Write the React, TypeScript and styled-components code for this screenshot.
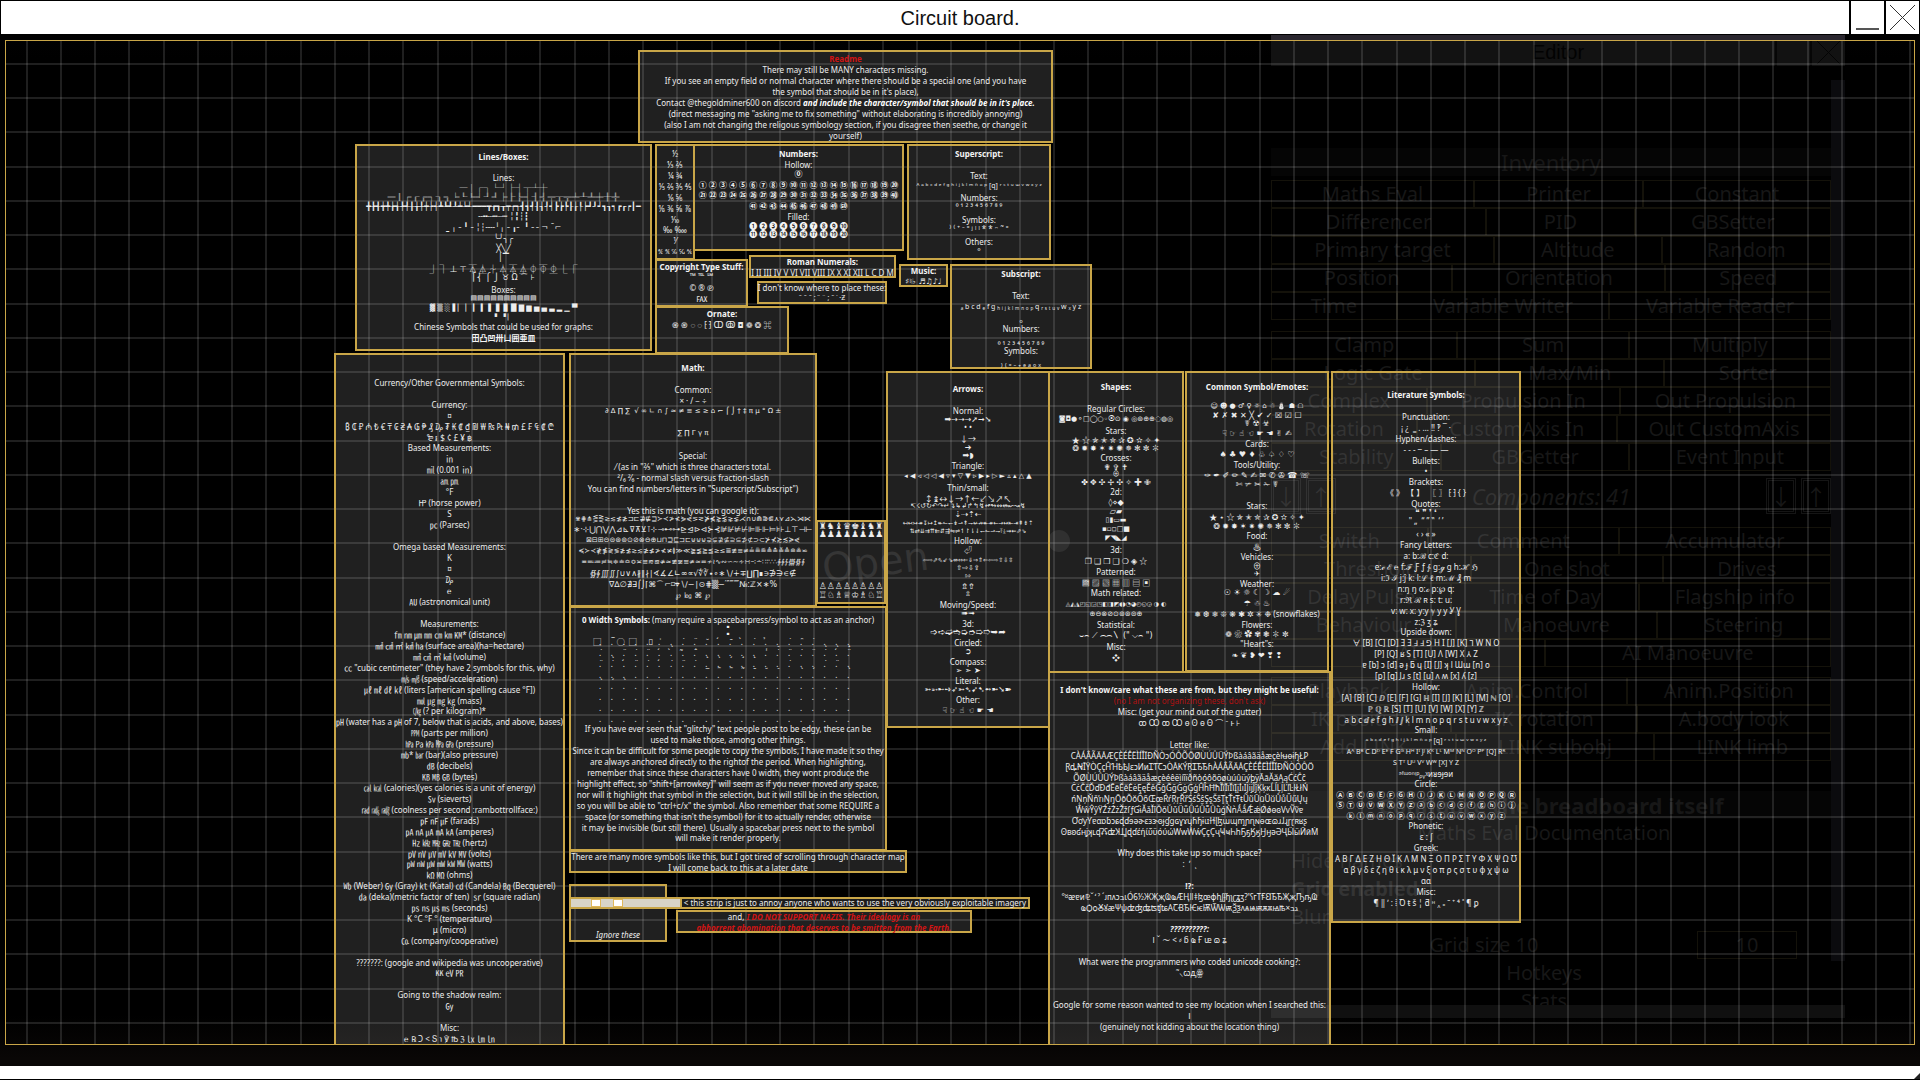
import React from "react";
import styled, { createGlobalStyle, css } from "styled-components";

const GOLD = "#c9a648";
const TEXT = "#ededed";
const SYMBOL_FONTS = '"Noto Sans", "Noto Sans CJK JP", "DejaVu Sans", sans-serif';

const Global = createGlobalStyle`
  * { box-sizing: border-box; }
  body { margin: 0; background: #000; overflow: hidden; }
  button, input { font: inherit; color: inherit; }
  h1, h2, p { margin: 0; font-weight: inherit; }
`;

/* ---------- window frame ---------- */

const Screen = styled.main`
  position: relative;
  display: flex;
  flex-direction: column;
  height: 100vh;
  background: linear-gradient(#030203, #000 60px, #000 94%, #090706 98%);
  font-family: ${SYMBOL_FONTS};
`;

const TitleBar = styled.header`
  display: flex;
  align-items: stretch;
  flex: none;
  height: 35px;
  border: 1px solid #000;
  background: #fff;
  color: #111;
  font-family: "Liberation Sans", Arial, sans-serif;
  z-index: 1;
`;

const Title = styled.h1`
  flex: 1;
  padding-left: 70px;
  font-size: 20px;
  line-height: 34px;
  text-align: center;
`;

const WindowButton = styled.button`
  width: 35px;
  padding: 0;
  border: 0;
  border-left: 2px solid #000;
  background: none;
  svg { display: block; width: 33px; height: 33px; }
`;

const BottomBar = styled.footer`
  flex: none;
  display: flex;
  justify-content: flex-end;
  height: 14px;
  border-bottom: 1px solid #000;
  background: #fff;
  z-index: 1;
`;

/* ---------- board ---------- */

const Board = styled.section`
  position: relative;
  flex: 1;
  margin: 5px 5px 21px;
  border: 1px solid ${GOLD};
  overflow: hidden;
`;

const line = "rgba(255, 255, 255, 0.12)";
const Grid = styled.div`
  position: absolute;
  inset: 0;
  background-image:
    linear-gradient(90deg, ${line} 2px, transparent 2px 34px, ${line} 34px 36px, transparent 36px 68px, ${line} 68px 70px, transparent 70px 103px, ${line} 103px 105px, transparent 105px),
    linear-gradient(${line} 2px, transparent 2px 34px, ${line} 34px 36px, transparent 36px 68px, ${line} 68px 70px, transparent 70px 103px, ${line} 103px 105px, transparent 105px);
  background-size: 137px 100%, 100% 137px;
  background-position: 54px 0, 0 22px;
`;

const Card = styled.article<{ $x: number; $y: number; $w: number; $h: number }>`
  position: absolute;
  left: ${(p) => p.$x - 6}px;
  top: ${(p) => p.$y - 41}px;
  width: ${(p) => p.$w}px;
  height: ${(p) => p.$h}px;
  border: 2px solid ${GOLD};
  background: rgba(255, 255, 255, 0.125);
  color: ${TEXT};
  font-size: 8px;
  text-align: center;
`;

const Line = styled.p<{ $step: number; $flags: string }>`
  display: flex;
  justify-content: center;
  height: 11px;
  margin-top: ${(p) => p.$step - 11}px;
  line-height: 11px;
  white-space: pre;
  ${(p) => p.$flags.includes("b") && css`font-weight: 700; color: #f4f4f4;`}
  ${(p) => p.$flags.includes("r") && css`color: #b01010;`}
  ${(p) => p.$flags.includes("i") && css`font-style: italic;`}
  ${(p) => p.$flags.includes("s") && css`font-size: 6px;`}
  ${(p) => p.$flags.includes("m") && css`font-size: 7px;`}
  ${(p) => p.$flags.includes("l") && css`font-size: 9px;`}
  ${(p) => p.$flags.includes("d") && css`font-family: "DejaVu Sans", sans-serif;`}
`;

const Strong = styled.strong`
  font-style: italic;
  color: #fff;
`;
const Soft = styled.span`
  font-weight: 400;
  color: ${TEXT};
`;
const Red = styled.em`
  color: #d01414;
  font-weight: 700;
`;

const Marks = styled.div`
  display: grid;
  grid-template-columns: repeat(22, 1fr);
  grid-auto-rows: 11px;
  margin: -3px 26px 0 28px;
  line-height: 11px;
  text-align: left;
`;

const Strip = styled.div`
  position: absolute;
  left: 563px;
  top: 856px;
  display: flex;
  width: 461px;
  height: 12px;
  border: 2px solid ${GOLD};
  background: #1c1c1c;
  color: ${TEXT};
  font-size: 8px;
`;
const PaleBlock = styled.div`
  display: flex;
  gap: 12px;
  width: 111px;
  padding-left: 20px;
  border-right: 2px solid ${GOLD};
  background: #d8d4c8;
`;
const Tile = styled.i`
  width: 10px;
  border: 1px solid #e0b85a;
  background: #fff;
`;
const StripText = styled.p`
  flex: 1;
  line-height: 8px;
  text-align: center;
  white-space: nowrap;
`;

/* Each row reads "step flags|text": step is the distance from the row above. */
function Rows({ src }: { src: string }) {
  return (
    <>
      {src
        .trim()
        .split("\n")
        .map((row, i) => {
          const bar = row.indexOf("|");
          const head = row.slice(0, bar);
          return (
            <Line key={i} $step={parseInt(head, 10) || 11} $flags={head}>
              {row.slice(bar + 1)}
            </Line>
          );
        })}
    </>
  );
}

const range = (from: number, to: number, sep = " ") =>
  Array.from({ length: to - from + 1 }, (_, i) => String.fromCodePoint(from + i)).join(sep);

type CardData = { x: number; y: number; w: number; h: number; rows: string };

const cards: CardData[] = [
  {
    x: 355, y: 144, w: 297, h: 207,
    rows: `
16b|Lines/Boxes:
21|Lines:
10b|─│┌┐└┘├┤┬┴┼
9b|═║╒╓╔╕╖╗╘╙╚╛╜╝╞╟╠╡╢╣╤╥╦╧╨╩╪╫╬
10d|╋╊╉╈╇╆╅╄╃╂╁╀┿┾┽┻┺┹┸┷┶┵━━━┳┲┱┰┯┮┭┫┪┩┨┧┦┥┣┢┡┠┟┞┝┛┚┙┓┒┑┏┎┍┃━
10d|╌╍┄┅┈┉ ╎╏┆┇
11d|⎵ ╷ ╴╹╶ ╎┆╌╌╵╷╶ ╻╴ ╹╶ ╴¬ ¯⌐
11d|╰╯╮╭
10d|╳╲╱
9d|│▔
11|⏌ ⏋ ⊥ ⊤ ⏄ ⏅ ⏆ ⏃ ⏄ ⏅ ⏀ ⏁ ⏂ ⎿ ⎾
9d|⎡⎨ ⎧ ⎭ ♉ Ω ⌒ ⊦
12|Boxes:
9md|▤▤▤▤▤▤▤▤▤▤
10md|▓ ▒ ░ ▌▏ ▏ ▎ ▍ ▌ ▋ ▊ █ ▇ ▆ ▅ ▄ ▃ ▂ ▁ ▀
8sd|▘ ▝ ▏
10|Chinese Symbols that could be used for graphs:
11b|田凸凹卅凵囲亜皿
`,
  },
  {
    x: 655, y: 144, w: 40, h: 116,
    rows: `
13|½
|⅓ ⅔
|¼ ¾
|⅕ ⅖ ⅗ ⅘
|⅙ ⅚
|⅛ ⅜ ⅝ ⅞
|⅒
10|‰ ‱
|⅟
m|℀ ℁ ℅ ℆ ⅍
`,
  },
  {
    x: 693, y: 144, w: 211, h: 107,
    rows: `
13b|Numbers:
|Hollow:
9b|⓪
b|${range(0x2460, 0x2473)}
10b|${range(0x3251, 0x325f)} ${range(0x32b1, 0x32b5)}
b|${range(0x32b6, 0x32bf)}
|Filled:
9b|${range(0x2776, 0x277f)}
8b|${range(0x24eb, 0x24f4)}
`,
  },
  {
    x: 907, y: 144, w: 144, h: 116,
    rows: `
13b|Superscript:
22|Text:
10m|ᴬ ᵃ ᵇ ᶜ ᵈ ᵉ ᶠ ᵍ ʰ ⁱ ʲ ᵏ ˡ ᵐ ⁿ ᵒ ᵖ [q] ʳ ˢ ᵗ ᵘ ᵚ ᵛ ʷ ˣ ʸ ᶻ
12|Numbers:
9|⁰ ¹ ² ³ ⁴ ⁵ ⁶ ⁷ ⁸ ⁹
13|Symbols:
9|⁾ ⁽ ⁺ ⁻ ⁼ ʲ ˡ ˡ * * ᵔ ˜ ⁼
13|Others:
10|°
`,
  },
  {
    x: 655, y: 259, w: 93, h: 48,
    rows: `
11b|Copyright Type Stuff:
9|™ ℡ ℠
12|© ® ℗
|℻
`,
  },
  { x: 749, y: 255, w: 147, h: 23, rows: `
10b|Roman Numerals:
11|I II III IV V VI VII VIII IX X XI XII L C D M` },
  { x: 757, y: 281, w: 130, h: 23, rows: `
10|I don't know where to place these:
10m|˜ ˜ ˜ ; ˙˙ ¨ ; ˜ ˙ ·Ƶ` },
  { x: 899, y: 264, w: 49, h: 23, rows: `
10b|Music:
11d|♯♮♭ ♬♫♪♩` },
  {
    x: 950, y: 264, w: 142, h: 105,
    rows: `
13b|Subscript:
22|Text:
m|ₐ b c d ₑ f g ₕ ᵢ ⱼ ₖ ₗ ₘ ₙ ₒ ₚ q ᵣ ₛ ₜ ᵤ ᵥ w ₓ y z
12|ₒ
10|Numbers:
12|₀ ₁ ₂ ₃ ₄ ₅ ₆ ₇ ₈ ₉
10|Symbols:
12|₎ ₍ ₌ ₋ ₊ ₔ ₐ ₒ ₓ
`,
  },
  { x: 655, y: 306, w: 134, h: 48, rows: `
11b|Ornate:
11|֍ ֎ ◌ ◌ ⁅ ⁆ ↀ ↂ ◘ ❁ ❂ ⌘` },
  {
    x: 334, y: 353, w: 231, h: 760,
    rows: `
33|Currency/Other Governmental Symbols:
22|Currency:
|¤
|₿ ₵ ₽ ₼ ₺ € ₸ ₢ ₴ ₳ ₲ ₱ ₰ ₯ ₮ ₭ ₡ ₫ ₪ ₩ ₨ ₧ ₦ ₥ £ ₣ ₠ ₡ ₾
|₻ ៛ $ ¢ £ ¥ ฿
10|Based Measurements:
|㏌
|㏕ (0.001 ㏌)
|㏂ ㏘
|°F
|㏋ (horse power)
|S
|㍶ (Parsec)
22|Omega based Measurements:
|K
|¤
|₯
|℮
|㍳ (astronomical unit)
22|Measurements:
|㎙ ㎚ ㎛ ㎜ ㎝ ㎞ ㏎* (distance)
|㎟ ㎠ ㎡ ㎢ ㏊ (surface area)(ha=hectare)
|㎣ ㎤ ㎥ ㎦ (volume)
|㏄ "cubic centimeter" (they have 2 symbols for this, why)
|㎧ ㎨ (speed/acceleration)
|㎕ ㎖ ㎗ ㎘ (liters [american spelling cause °F])
|㏖ ㎍ ㎎ ㎏ (mass)
10|㏆ (? per kilogram)*
|㏗ (water has a ㏗ of 7, below that is acids, and above, bases)
|㏙ (parts per million)
|㍱ ㎩ ㎪ ㎫ ㎬ (pressure)
|㏔* ㍴ (bar)(also pressure)
|㏈ (decibels)
|㎅ ㎆ ㎇ (bytes)
|㎈ ㎉ (calories)(yes calories is a unit of energy)
|㏜ (sieverts)
|㎭ ㎮ ㎯ (coolness per second :rambottrollface:)
|㎊ ㎋ ㎌ (farads)
|㎀ ㎁ ㎂ ㎃ ㎄ (amperes)
|㎐ ㎑ ㎒ ㎓ ㎔ (hertz)
|㎴ ㎵ ㎶ ㎷ ㎸ ㎹ (volts)
10|㎺ ㎻ ㎼ ㎽ ㎾ ㎿ (watts)
|㏀ ㏁ (ohms)
|㏝ (Weber) ㏉ (Gray) ㏏ (Katal) ㏅ (Candela) ㏃ (Becquerel)
|㍲ (deka)(metric factor of ten)  ㏛ (square radian)
|㎰ ㎱ ㎲ ㎳ (seconds)
|K °C °F ° (temperature)
|μ (micro)
|㏇ (company/cooperative)
22|???????: (google and wikipedia was uncooperative)
10|㏍ ㋎ ㏚
22|Going to the shadow realm:
|㏉
22|Misc:
|℮ ℞ Ɔ < Տ ℩ ℣ ℔ ℨ ㏓ ㏐ ㏑
`,
  },
  {
    x: 569, y: 353, w: 248, h: 254,
    rows: `
18b|Math:
22|Common:
|× · / − ÷
md|∂ ∆ ∏ ∑  √ ∞ ∟ ∩ ∫ ≈ ≠ ≡ ≤ ≥ ⌂ ⌐ ⌠ ⌡ † ‡ π μ ° Ω ±
22md|∑ ∏ Γ γ π
22|Special:
|⁄ (as in "⅔" which is three characters total.
|²/₆ ²⁄₆ - normal slash versus fraction-slash
|You can find numbers/letters in "Superscript/Subscript")
22|Yes this is math (you can google it):
9md|⋇⋕⋔⋚⋛≳≲≴≵⊐⊏⋣⋢⊒≻≺≯≮⋟⋞⋝⋜⋡⋠⋩⋨⋧⋦⋌∩∪⋒⋑⋐⋏⋎⊿⋋⋊⋉
10d|∗·⊹⋃⋂⋁⋀⊿⊾⊽⊼⊻⊺⊹⊸⊷⊶⊵⊴⊳⊲⊱⊰⊯⊮⊭⊬⊫⊪⊩⊨⊧⊦⊥⊤⊣⊢
11md|⊠⊟⊞⊝⊜⊛⊚⊙⊘⊗⊖⊕⊔⊓⊒⊑⊐⊏⊎⊍⊌⊋⊊⊉⊈⊇⊆⊅⊄⊃⊂⊁⊀≿≾≽⋞
11md|≼≻≺≹≸≷≶≵≴≳≲≱≰≯≮≭≬≫≪≩≨≧≦≥≤≣≢≡≠≟≞≝≜≛≚≙≘≗⋍
11md|≖≕≔≓≒≑≐≏≎≍≌≋≊≉≈≇≆≅≄≃≂≁≀∿∾∽∼∻∺∹∸∷∶∵∴∳∲∱∰∯∮
11d|∯∮∭∬∫∪∨∧∦∥∤∣∢∡∠∟∞∝√∜∛∙∘∗∖∕∔∓∐∏∎∍∌∋∊∉
11d|∇∆∅∄∃⌠⌡⌈⌘⌒⌐⌑⌖∖∕−∣⊙⋕▒−′″‴⁗№:ℤ×∗%
11d|℘ ㏒ ⌘ ℘
`,
  },
  {
    x: 816, y: 520, w: 70, h: 84,
    rows: `
10ld|♜♞♝♛♚♝♞♜
8ld|♟♟♟♟♟♟♟♟
52ld|♙♙♙♙♙♙♙♙
9ld|♖♘♗♕♔♗♘♖
`,
  },
  {
    x: 886, y: 371, w: 164, h: 357,
    rows: `
21b|Arrows:
22|Normal:
9d|➡→➝→➚➞➘
7|• •
12|↓→
9d|➔
8d|➡◗
10|Triangle:
11md|◂ ◀ ◃ ◁ ◁ ◀ ▿ ▾ ▽ ▼ ▹ ▶ ▸ ▷ ► ▵ ▴ △ ▲
11|Thin/small:
11|↕↨↔↓→↑←↙↘↗↖
8md|↸☇↺↻↶↷↵↴↳↲↱↰↯↫↬↭↮↜↝↯
8d|⇣⇢⇡⇠
8sd|↤↢↣↠↧↦↥↞↼↽↡⇀↟⇁↚↛↞↠←→↔⇤⇥⇞⇟⇡
8sd|⇅⇄⇊⇉⇈⇇⇵⇶⇋⇌↿↾⇂⇃↽↼⇀⇁⤒⤓⇝⇜⇗⇘
10|Hollow:
9|⏎
10sd|⇦⇨⇗⇖⇙⇘⇎⇔⇐⇓⇒⇑⇐⇦⇨⇧⇩⇳
9md|⇧⇨⇩⇪
8md|⇰
10d|⇯⇮
8md|⇫
10|Moving/Speed:
9d|➠➟
10|3d:
9ld|➩➪➫➬➭➮➯➱➥➦
10|Circled:
9d|➲
10|Compass:
9d|➢ ➣ ➤
10|Literal:
9d|➳➵➸➺➶➳➴➹➷➻➼➘➽
10|Other:
11d|☟ ☞ ☝ ☜ ☛ ☚
`,
  },
  {
    x: 1048, y: 371, w: 136, h: 302,
    rows: `
19b|Shapes:
22|Regular Circles:
11md|◙◘●⚬□◯○◦⦿⊙ ◉ ◎⊚⊕⊕◌◍◎
11|Stars:
9|★ ☆ ✯ ✭ ✮ ✰ ✪ ✫ ✧ ✦
8|❂ ✹ ✸ ✶ ✷ ✺ ✵ ✻ ✼ ✽
10|Crosses:
9|✟ ✞ ✝
7m|⊕
8|✤ ✥ ✣ ✢ ✣ ✧ ✚ ✙
10|2d:
11d|◊⋄◆
9d|▱▰
9md|▯▮▭▬
9md|▪▫◽□■
9md|◤◥◣◢
11|3d:
11|❐ ❏ ❒ ❑ ❍ ◈ ☆
11|Patterned:
11|▩ ▨ ▧ ▦ ▥ ▤ ▣
10|Math related:
11sd|◬◭◮◰◱◲◳◧◨◩◖◗◔◕◴◵◶ ◑ ◐
11md|⊕⊖⊗⊘⊙⊚⊛⊜⊕
10|Statistical:
11d|⌣⌢ ⟋ ⌒⌒〵 (" ⌵⌢ ")
11|Misc:
11|❖
`,
  },
  {
    x: 1185, y: 371, w: 144, h: 301,
    rows: `
19b|Common Symbol/Emotes:
20md|☺ ☻ ● ♂ ♀ ☼ ⌂ ☃ ⛄ ☗ ☖
9d|✘ ✗ ✖ ✕ ╳ ✔ ✓ ☒ ☑ ☐
8d|☤ ☢ ☣
10d|☟ ☞ ☝ ☜ ☛ ☚ ✌ ✍
10|Cards:
11d|♠ ♣ ♥ ♦ ♧ ♤ ♢ ♡
10|Tools/Utility:
11d|✑ ✒ ✐ ✏ ✎ ✍ ✉ ✆ ✇ ☎ ☏
9d|✄ ✃ ✂ ✁ ☤
21|Stars:
11|★ ⋆ ☆ ✯ ✭ ✮ ✰ ✪ ✫ ✧ ✦
9|❂ ✹ ✸ ✶ ✷ ✺ ✵ ✻ ✼ ✽
10|Food:
11|♨
10|Vehicles:
9|⊕
8m|✈
10|Weather:
9d|☉ ☀ ☼ ☾ ☽ ☁ ☄
11d|☂ ☃ ♨
10|❅ ❆ ❄ ❊ ❋ ✱ ✲ ✳ ❉ (snowflakes)
11|Flowers:
9|❁ ❀ ✿ ✾ ❃ ✽ ✼
10|"Heart"s:
11|❧ ❦ ❥ ❤ ❣ ❢
`,
  },
  {
    x: 1331, y: 371, w: 190, h: 552,
    rows: `
27b|Literature Symbols:
22|Punctuation:
|¡ ¿  ‗ . … ‼ ‽ ‾ ·
|Hyphen/dashes:
|‐ ‑ ⁃ ‒ – — ―
|Bullets:
10|•
|Brackets:
|《 》 【 】  〖 〗 ⁅ ⁆ { }
|Quotes:
9d|❝ ❞ ❜ ❛
8|" „  “ ” ‟  ‘ ’
13|‹ › « »
|Fancy Letters:
|a: b:ℬ c:ℭ d:
|e:ℯ ℰ ℮ f:ℱ Ƒ ƒ ∱ g:ℊ g h:ℋ ℌ
|i:ℑ ℐ j:ĵ k: l:ℒ ℓ m:ℳ ₰ m
|n:ŋ ŋ o:ℴ p:℘ q:
|r:ℜ ℛ ʀ s: t: u:
|v: w: x: y:y ℽ y y Ỿ Ɣ
|z:ℨ ʒ ʑ
10|Upside down:
|∀ [B] [C] [D] Ǝ Ǝ Ⅎ Ⅎ ⅁ H I [J] [K] ⅂ W N O
|[P] [Q] ʁ S [T] [U] Λ [W] X ⅄ Z
|ɐ [b] ɔ [d] ǝ ɟ ƃ ɥ [I] [J] ʞ l Ɯɯ [n] o
|[p] [q] Jɹ s [t] [u] ʌ ʍ [x] ʎ [z]
|Hollow:
|[A] [B] [C] ⅅ [E] [F] [G] ℍ [I] [J] [K] [L] [M] ℕ [O]
|ℙ ℚ ℝ [S] [T] [U] [V] [W] [X] [Y] ℤ
|a b c ⅆ ⅇ f g h ⅈ ⅉ k l m n o p q r s t u v w x y z
10|Small:
11m|ᵃ ᵇ ᶜ ᵈ ᵉ ᶠ ᵍ ʰ ⁱ ʲ ᵏ ˡ ᵐ ⁿ ᵒ ᵖ [q] ʳ ˢ ᵗ ᵘ ᵚ ᵛ ʷ ˣ ʸ ᶻ
m|Aᴬ Bᴮ C Dᴰ Eᴱ F Gᴳ Hᴴ Iᴵ Jᴶ Kᴷ Lᴸ Mᴹ Nᴺ Oᴼ Pᴾ [Q] Rᴿ
m|S Tᵀ Uᵁ Vⱽ Wᵂ [X] Y Z
|ᵊᶠᵚᵒⁿᵎᵖᵨᵧᵡᴎᴚɘɟɘᴎ
10|Circle:
b|${range(0x24b6, 0x24c7)}
10b|${range(0x24c8, 0x24d9)}
b|${range(0x24da, 0x24e9)}
10|Phonetic:
|ɛ ː ʃ
|Greek:
|Α Β Γ Δ Ε Ζ Η Θ Ϊ Κ Λ Μ Ν Ξ Ο Π Ρ Σ Τ Υ Φ Χ Ψ Ω Ʊ
|α β γ δ ε ζ η θ ι κ λ μ ν ξ ο π ρ ς σ τ υ φ χ ψ ω
|ɑɑ
|Misc:
|¶̃ ‖ ʼ : ⁞ Ꝺ ŧ š ¦ ƌ ᵸ ‸ ₌ ˉ ⁺ ⁴ ˟ ¶ ꝑ
`,
  },
  {
    x: 1048, y: 671, w: 283, h: 400,
    rows: `
22b|I don't know/care what these are from, but they might be useful:
r|(no I am not organizing these, don't ask)
|Misc: (get your mind out of the gutter)
|ꝏ Ꝏ ꚙ Ꚙ ɵ Ꙩ ө Ꙫ ⌒ ᐨ ⱶ ⊦
22|Letter like:
|CÀÁÂÃÄÅÆÇÈÉÊËÌÍÎÏÐÑÒɔÓÔÕÖØÙÚÛÜÝÞßàáâãäåæçèŀʉɵɨɧŁꝐ
|ⱤȡꞤĪŸÒÇçĤꞪҌҌJɛɔИиꞮƬꞆɔÒÅKÝŖꞮЂЂɦÀÁÂÃÄÅÇÈÉÊËÌÍÎÏÐÑÒÓÔÖ
|ÕØÙÚÛÜÝÞßàáâãäåæçèéêëìíîïðñòóôõöøùúûüýþÿĀāĂăĄąĆćĈĉ
10|ĊċČčĎďĐđĒēĔĕĖėĘęĚěĜĝĞğĠġĢģĤĥĦħĨĩĪīĬĭĮįİıĲĳĴĵĶķĸĹĺĻļĽľĿŀŁłŃ
|ńŅņŇňŉŊŋŌōŎŏŐőŒœŔŕŖŗŘřŚśŜŝŞşŠšŢţŤťŦŧŨũŪūŬŭŮůŰűŲų
|ŴŵŶŷŸŹźŻżŽžſƒƓɨǍǎǏǐǑǒǓǔǕǖǗǘǙǚǛǜǵǸǹǺǻǼǽǾǿɵɞVvṼṽɐ
|ƠơƴƳɐɑɒɓɔɕɖɗɘəɚɛɜɝɞɟɠɡɢɣɤɥɦɧɨɩɪɫɬɭɮɯɰɱɲɳɴɵɶɷɹɺɻɼɽʀʁʂ
|ʘʙʚʛʜʝʞʟʠʡʢʣꞰꞱꞲɖɗέήίΰϋόύώWwẀẃÇçÇҷҸҹҺһҔҕӃӄӇӈәӘҶӸӹӢӣṀ
21|Why does this take up so much space?
|:  ʹ  ͺ
22b|⁉:
|°ᴽᴂɐᴎ⅊ˇ ̒ ˀ ´ᴊᴨᴧɔבɩÓ6½ЖҖҗҨҩÆҢǁǂɮœфꞕʃʄɧʅʗʓʒ?ꞌʕᴦTꞘꞚЂЂҖҗҦҧҨ
|ҩѺѻꙊꙋæΨψʣʤʥʦʧʨAꞆꞖЂѤѥѬѾѠѭѮѯʌѧѩѭѫꙛꙝꙓ×גב
21bi|??????????:
|ا ˇ ⁓ < ⸗ ᵷ ҩ Ғ ᵫ ɷ ʑ
22|What were the programmers who coded unicode cooking?:
|˜⸜ꙍꚉꙮ
32|Google for some reason wanted to see my location when I searched this:
|ⵏ
|(genuinely not kidding about the location thing)
`,
  },
];

const combining = [
  "\u20de\u0305\u20dd\u20de\u20df\u0351\u0316\u0307\u0308\u0306\u0301\u0304\u0300\u0307\u0309\u0320\u0307\u0311\u0307\u0316\u0316\u031f",
  "\u0307\u0316\u0308\u0307\u0308\u0301\u0300\u0303\u0302\u0319\u0316\u0317\u0318\u0319\u033e\u0307\u0308\u0307\u0308\u0307\u0301\u0308",
  "\u0308\u0307\u0301\u0308\u0307\u0301\u0307\u0308\u0307\u0332\u033c\u033c\u0330\u0331\u032e\u0320\u0307\u0316\u0317\u0307\u0308\u0316",
  "\u0316\u0317\u0316",
  "",
  "",
  "",
  "",
];

const paragraph = `
10|If you have ever seen that "glitchy" text people post to be edgy, these can be
|used to make those, among other things.
|Since it can be difficult for some people to copy the symbols, I have made it so they
|are always anchored directly to the rightof the period. When highlighting,
|remember that since these characters have 0 width, they wont produce the
|highlight effect, so "shift+[arrowkey]" will seem as if you never moved any space,
|nor will it highlight that symbol in the selection, but it will still be in the selection,
|so you will be able to "ctrl+c/x" the symbol. Also remember that some REQUIRE a
|space (or something that isn't the symbol) for it to actually render, otherwise
|it may be invisible (but still there). Usually a spacebar press next to the symbol
10|will make it render properly.
`;

/* ---------- dimmed editor window behind the board ---------- */

const Editor = styled.aside`
  position: absolute;
  left: 1271px;
  right: 75px;
  top: 35px;
  bottom: 62px;
  display: flex;
  flex-direction: column;
  overflow: hidden;
  padding-right: 14px;
  border-bottom: 13px solid #101010;
  color: #171717;
  font-size: 20px;

  &::after {
    content: "";
    position: absolute;
    top: 45px;
    right: 0;
    bottom: 44px;
    width: 14px;
    background: #0b0b0e;
  }
`;
const EditorTitle = styled.div`
  display: flex;
  flex: none;
  height: 31px;
  margin-right: -14px;
  border-top: 5px solid #2a272f;
  background: #121212;
  color: #020202;
  font-family: "Liberation Sans", Arial, sans-serif;
  line-height: 24px;
`;
const EditorName = styled.span`
  flex: 1;
  padding-left: 70px;
  text-align: center;
`;
const GhostBox = styled.button`
  width: 35px;
  padding: 0;
  border: 0;
  border-left: 2px solid #060606;
  background: none;
  svg { display: block; }
`;
const Heading = styled.h2<{ $top: number; $bold?: boolean }>`
  flex: none;
  margin-top: ${(p) => p.$top}px;
  background: #050505;
  line-height: 28px;
  font-size: 22px;
  font-weight: ${(p) => (p.$bold ? 700 : 400)};
  text-align: center;
`;
const Group = styled.div<{ $top: number }>`
  flex: none;
  margin-top: ${(p) => p.$top}px;
`;
const GroupRow = styled.div`
  display: flex;
  height: 28px;
`;
const Cell = styled.button<{ $grow: number }>`
  flex: ${(p) => p.$grow} 1 0;
  min-width: 0;
  padding: 0;
  border: 1px solid #14120a;
  background: none;
  line-height: 26px;
  white-space: nowrap;
`;
const Components = styled.div`
  display: flex;
  flex: none;
  justify-content: space-between;
  align-items: center;
  height: 56px;
  padding-bottom: 6px;
  font-size: 22px;
  font-style: italic;
`;
const Pair = styled.div`
  display: flex;
  gap: 5px;
`;
const MoveButton = styled.button`
  width: 30px;
  height: 36px;
  padding: 0;
  border: 3px double #151515;
  background: none;
  font-style: normal;
  line-height: 28px;
`;
const Option = styled.label<{ $bold?: boolean; $center?: boolean }>`
  display: block;
  flex: none;
  height: 28px;
  padding: 0 34px 0 20px;
  line-height: 28px;
  font-weight: ${(p) => (p.$bold ? 700 : 400)};
  text-align: ${(p) => (p.$center ? "center" : "left")};
`;
const SizeRow = styled.div`
  display: flex;
  flex: none;
  height: 28px;
  padding-right: 34px;
  line-height: 28px;
  label { flex: 1; text-align: center; }
  input { width: 100px; padding: 0; border: 1px solid #14120a; background: none; text-align: center; }
`;

type Cells = [string, number][];
const groups: { top: number; rows: Cells[] }[] = [
  {
    top: 4,
    rows: [
      [["Maths Eval", 202], ["Printer", 168], ["Constant", 187]],
      [["Differencer", 215], ["PID", 148], ["GBSetter", 196]],
      [["Primary target", 223], ["Altitude", 167], ["Random", 169]],
      [["Position", 181], ["Orientation", 213], ["Speed", 165]],
      [["Time", 125], ["Variable Writer", 213], ["Variable Reader", 222]],
    ],
  },
  {
    top: 11,
    rows: [
      [["Clamp", 186], ["Sum", 171], ["Multiply", 202]],
      [["Logic Gate", 204], ["Max/Min", 189], ["Sorter", 166]],
      [["Complex", 155], ["Propulsion In", 193], ["Out Propulsion", 211]],
      [["Rotation", 145], ["CustomAxis In", 200], ["Out CustomAxis", 214]],
      [["Stability", 170], ["GBGetter", 187], ["Event Input", 202]],
    ],
  },
];
const lateGroups: { top: number; rows: Cells[] }[] = [
  {
    top: 0,
    rows: [
      [["Switch", 156], ["Comment", 191], ["Accumulator", 212]],
      [["Threshold", 200], ["One shot", 191], ["Drives", 168]],
      [["Delay Pulse", 180], ["Time of Day", 187], ["Flagship info", 192]],
      [["Behaviour", 185], ["Manoeuvre", 200], ["Steering", 174]],
      [["AI", 273], ["AI Manoeuvre", 286]],
    ],
  },
  {
    top: 10,
    rows: [
      [["Playback", 155], ["Anim.Control", 200], ["Anim.Position", 204]],
      [["IK position", 180], ["IK rotation", 185], ["A.body look", 194]],
      [["Add LINK", 185], ["LINK subobj", 197], ["LINK limb", 177]],
    ],
  },
];

const Wordmark = styled.div`
  position: absolute;
  left: 822px;
  top: 532px;
  color: #181818;
  font-family: "DejaVu Sans", sans-serif;
  font-size: 40px;
  line-height: 60px;
  transform: rotate(-7deg);
`;
const Blob = styled.i`
  position: absolute;
  left: 1048px;
  top: 530px;
  width: 22px;
  height: 22px;
  border-radius: 50%;
  background: #131313;
`;

function GroupList({ items }: { items: { top: number; rows: Cells[] }[] }) {
  return (
    <>
      {items.map((g, i) => (
        <Group key={i} $top={g.top}>
          {g.rows.map((r, j) => (
            <GroupRow key={j}>
              {r.map(([label, grow]) => (
                <Cell key={label} $grow={grow}>{label}</Cell>
              ))}
            </GroupRow>
          ))}
        </Group>
      ))}
    </>
  );
}

export default function App() {
  return (
    <Screen>
      <Global />
      <Wordmark>Open</Wordmark>
      <Blob />
      <Editor>
        <EditorTitle>
          <EditorName>Editor</EditorName>
          <GhostBox aria-label="Minimise editor" />
          <GhostBox aria-label="Close editor">
            <svg width="33" height="26" viewBox="0 0 33 26"><path d="M5 1 28 24M28 1 5 24" stroke="#040404" /></svg>
          </GhostBox>
        </EditorTitle>
        <Heading $top={82}>Inventory</Heading>
        <GroupList items={groups} />
        <Components>
          <Pair>
            <MoveButton>↓</MoveButton>
            <MoveButton>↑</MoveButton>
          </Pair>
          <span>Components: 41</span>
          <Pair>
            <MoveButton>↓</MoveButton>
            <MoveButton>↑</MoveButton>
          </Pair>
        </Components>
        <GroupList items={lateGroups} />
        <Heading $top={30} $bold>Configure the breadboard itself</Heading>
        <Option $center>Maths Eval Documentation</Option>
        <Option>Hide names</Option>
        <Option $bold>Grid enabled</Option>
        <Option>Blur</Option>
        <SizeRow>
          <label htmlFor="grid-size">Grid size 10</label>
          <input id="grid-size" defaultValue="10" />
        </SizeRow>
        <Option $center>Hotkeys</Option>
        <Option $center>Stats</Option>
      </Editor>

      <TitleBar>
        <Title>Circuit board.</Title>
        <WindowButton aria-label="Minimise">
          <svg viewBox="0 0 33 33"><path d="M5 28H28" stroke="#555" strokeWidth="2" /></svg>
        </WindowButton>
        <WindowButton aria-label="Close">
          <svg viewBox="0 0 33 33"><path d="M4 4 29 29M29 4 4 29" stroke="#333" strokeWidth="1" /></svg>
        </WindowButton>
      </TitleBar>

      <Board>
        <Grid />
        <Card $x={638} $y={50} $w={415} $h={93}>
          <Line $step={12} $flags="br"><Red as="span">Readme</Red></Line>
          <Rows src={`
|There may still be MANY characters missing.
|If you see an empty field or normal character where there should be a special one (and you have
|the symbol that should be in it's place),`} />
          <Line $step={11} $flags="">Contact @thegoldminer600 on discord <Strong>and include the character/symbol that should be in it's place.</Strong></Line>
          <Rows src={`
|(direct messaging me "asking me to fix something" without elaborating is incredibly annoying)
|(also I am not changing the religous symbology section, if you disagree then seethe, or change it
|yourself)`} />
        </Card>

        {cards.map((c, i) => (
          <Card key={i} $x={c.x} $y={c.y} $w={c.w} $h={c.h}>
            <Rows src={c.rows} />
          </Card>
        ))}

        <Card $x={569} $y={606} $w={318} $h={245}>
          <Line $step={17} $flags="b">0 Width Symbols: <Soft>(many require a spacebarpress/symbol to act as an anchor)</Soft></Line>
          <Rows src={"7b|▪\n7b|▪"} />
          <Marks>
            {combining.flatMap((row, r) =>
              Array.from({ length: 22 }, (_, c) => <span key={`${r}-${c}`}>{"." + (row[c] ?? "")}</span>)
            )}
          </Marks>
          <Rows src={paragraph} />
        </Card>
        <Card $x={569} $y={850} $w={338} $h={23}>
          <Rows src={"10|There are many more symbols like this, but I got tired of scrolling through character map\n|I will come back to this at a later date"} />
        </Card>
        <Card $x={569} $y={884} $w={98} $h={58}>
          <Rows src={"54i|Ignore these"} />
        </Card>
        <Strip>
          <PaleBlock><Tile /><Tile /></PaleBlock>
          <StripText>&lt; this strip is just to annoy anyone who wants to use the very obviously exploitable imagery</StripText>
        </Strip>
        <Card $x={676} $y={910} $w={296} $h={23}>
          <Line $step={10} $flags="">and, <Red>I DO NOT SUPPORT NAZIS. Their ideology is an</Red></Line>
          <Line $step={11} $flags=""><Red>abhorrent abomination that deserves to be smitten from the Earth.</Red></Line>
        </Card>
      </Board>

      <BottomBar>
        <svg width="14" height="13" viewBox="0 0 14 13"><path d="M8 13 14 7V13Z" fill="#222" /></svg>
      </BottomBar>
    </Screen>
  );
}
